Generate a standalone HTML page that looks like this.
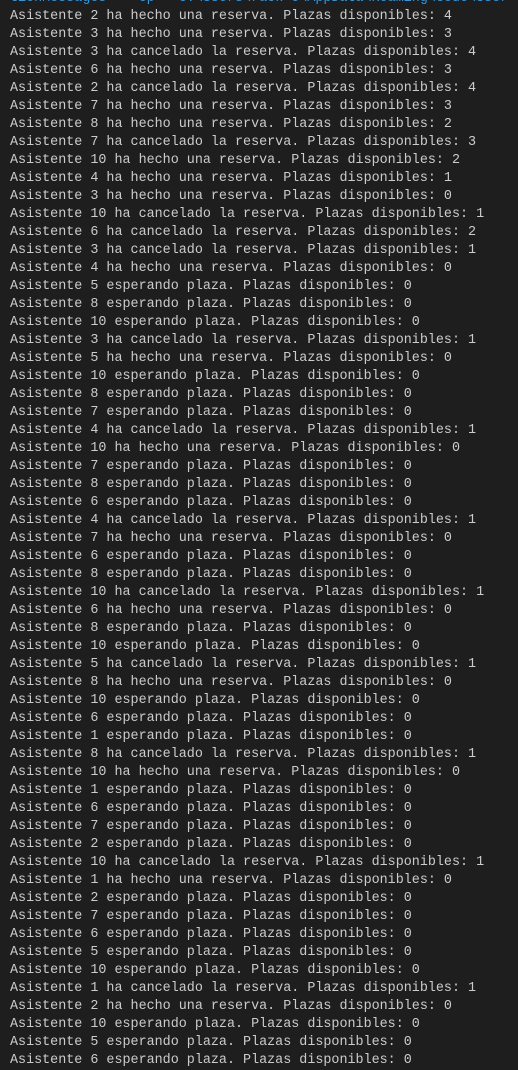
<!DOCTYPE html>
<html><head><meta charset="utf-8"><style>
html,body{margin:0;padding:0;background:#1e1e1e;width:518px;height:1058px;overflow:hidden}
pre{margin:0;position:absolute;left:10px;top:-10px;font-family:"Liberation Mono",monospace;font-size:13.4px;line-height:18px;color:#cccccc;white-space:pre}
.b{color:#3794d6}
</style></head><body><pre><span class="b">tionMessages' '-cp' 'c:\Users\rack-0\AppData\Roaming\Code\User</span>
Asistente 2 ha hecho una reserva. Plazas disponibles: 4
Asistente 3 ha hecho una reserva. Plazas disponibles: 3
Asistente 3 ha cancelado la reserva. Plazas disponibles: 4
Asistente 6 ha hecho una reserva. Plazas disponibles: 3
Asistente 2 ha cancelado la reserva. Plazas disponibles: 4
Asistente 7 ha hecho una reserva. Plazas disponibles: 3
Asistente 8 ha hecho una reserva. Plazas disponibles: 2
Asistente 7 ha cancelado la reserva. Plazas disponibles: 3
Asistente 10 ha hecho una reserva. Plazas disponibles: 2
Asistente 4 ha hecho una reserva. Plazas disponibles: 1
Asistente 3 ha hecho una reserva. Plazas disponibles: 0
Asistente 10 ha cancelado la reserva. Plazas disponibles: 1
Asistente 6 ha cancelado la reserva. Plazas disponibles: 2
Asistente 3 ha cancelado la reserva. Plazas disponibles: 1
Asistente 4 ha hecho una reserva. Plazas disponibles: 0
Asistente 5 esperando plaza. Plazas disponibles: 0
Asistente 8 esperando plaza. Plazas disponibles: 0
Asistente 10 esperando plaza. Plazas disponibles: 0
Asistente 3 ha cancelado la reserva. Plazas disponibles: 1
Asistente 5 ha hecho una reserva. Plazas disponibles: 0
Asistente 10 esperando plaza. Plazas disponibles: 0
Asistente 8 esperando plaza. Plazas disponibles: 0
Asistente 7 esperando plaza. Plazas disponibles: 0
Asistente 4 ha cancelado la reserva. Plazas disponibles: 1
Asistente 10 ha hecho una reserva. Plazas disponibles: 0
Asistente 7 esperando plaza. Plazas disponibles: 0
Asistente 8 esperando plaza. Plazas disponibles: 0
Asistente 6 esperando plaza. Plazas disponibles: 0
Asistente 4 ha cancelado la reserva. Plazas disponibles: 1
Asistente 7 ha hecho una reserva. Plazas disponibles: 0
Asistente 6 esperando plaza. Plazas disponibles: 0
Asistente 8 esperando plaza. Plazas disponibles: 0
Asistente 10 ha cancelado la reserva. Plazas disponibles: 1
Asistente 6 ha hecho una reserva. Plazas disponibles: 0
Asistente 8 esperando plaza. Plazas disponibles: 0
Asistente 10 esperando plaza. Plazas disponibles: 0
Asistente 5 ha cancelado la reserva. Plazas disponibles: 1
Asistente 8 ha hecho una reserva. Plazas disponibles: 0
Asistente 10 esperando plaza. Plazas disponibles: 0
Asistente 6 esperando plaza. Plazas disponibles: 0
Asistente 1 esperando plaza. Plazas disponibles: 0
Asistente 8 ha cancelado la reserva. Plazas disponibles: 1
Asistente 10 ha hecho una reserva. Plazas disponibles: 0
Asistente 1 esperando plaza. Plazas disponibles: 0
Asistente 6 esperando plaza. Plazas disponibles: 0
Asistente 7 esperando plaza. Plazas disponibles: 0
Asistente 2 esperando plaza. Plazas disponibles: 0
Asistente 10 ha cancelado la reserva. Plazas disponibles: 1
Asistente 1 ha hecho una reserva. Plazas disponibles: 0
Asistente 2 esperando plaza. Plazas disponibles: 0
Asistente 7 esperando plaza. Plazas disponibles: 0
Asistente 6 esperando plaza. Plazas disponibles: 0
Asistente 5 esperando plaza. Plazas disponibles: 0
Asistente 10 esperando plaza. Plazas disponibles: 0
Asistente 1 ha cancelado la reserva. Plazas disponibles: 1
Asistente 2 ha hecho una reserva. Plazas disponibles: 0
Asistente 10 esperando plaza. Plazas disponibles: 0
Asistente 5 esperando plaza. Plazas disponibles: 0
Asistente 6 esperando plaza. Plazas disponibles: 0</pre></body></html>
